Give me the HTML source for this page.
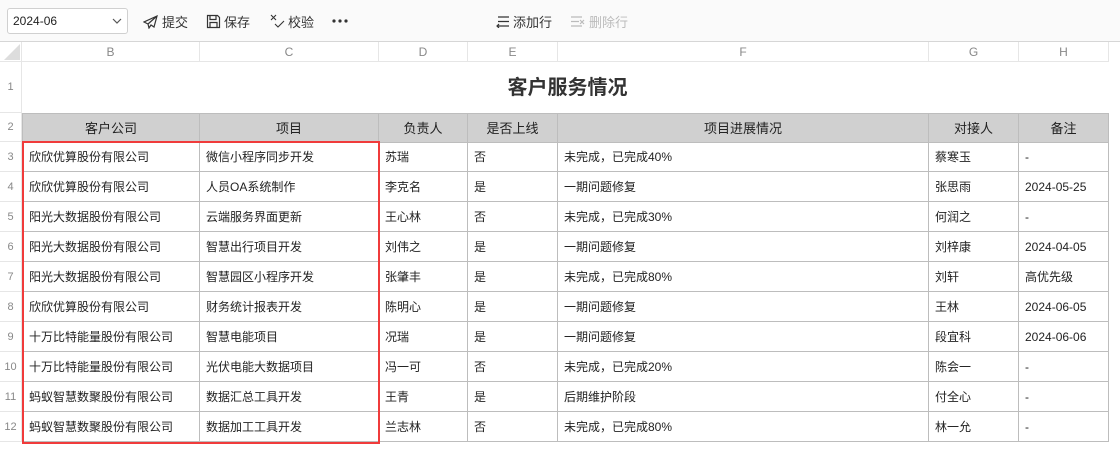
<!DOCTYPE html><html><head><meta charset="utf-8"><style>
*{margin:0;padding:0;box-sizing:border-box}
body{width:1120px;height:452px;overflow:hidden;background:#fff;font-family:"Liberation Sans","Noto Sans CJK SC",sans-serif;position:relative;color:#222}
.tb{position:absolute;left:0;top:0;width:1120px;height:42px;background:#fafafa;border-bottom:1px solid #d6d6d6}
.sel{position:absolute;left:7px;top:8px;width:121px;height:26px;border:1px solid #d0d0d0;border-radius:3px;background:#fff;font-size:12px;padding:5px 0 0 5px}
.btn{position:absolute;top:12px;font-size:13px;color:#333;display:flex;align-items:center;gap:3px}
.dis{color:#bbb}
.a{position:absolute}
.ch{position:absolute;top:42px;height:20px;font-size:12px;color:#888;text-align:center;line-height:20px;border-right:1px solid #e6e6e6;border-bottom:1px solid #e6e6e6}
.rh{position:absolute;left:0;width:22px;font-size:11px;color:#888;text-align:center;border-bottom:1px solid #e6e6e6;border-right:1px solid #e6e6e6}
.c{position:absolute;font-size:12px;line-height:31px;padding-left:6px;white-space:nowrap;border-right:1px solid #bdbdbd;border-bottom:1px solid #bdbdbd;height:30px}
.h{background:#d0d0d0;text-align:center;padding:0;font-size:13px;line-height:29px}
</style></head><body>
<div class="tb">
<div class="sel">2024-06<svg class="a" style="left:104px;top:8px" width="10" height="8"><path d="M1 2l4 4 4-4" stroke="#555" fill="none" stroke-width="1.2"/></svg></div>
<div class="btn" style="left:143px"><svg width="16" height="14"><path d="M14 1L1 7l4 2 1 4 2-3 3 2z M5 9l9-8" stroke="#333" fill="none" stroke-width="1.2"/></svg>提交</div>
<div class="btn" style="left:206px"><svg width="15" height="15"><path d="M1.5 1.5h10l2 2v10h-12z M4 1.5v4h6v-4 M4 13.5v-5h7v5" stroke="#333" fill="none" stroke-width="1.2"/></svg>保存</div>
<div class="btn" style="left:270px"><svg width="15" height="15"><path d="M1 1l5 5M6 1l-5 5M5 10l3 3 6-6" stroke="#333" fill="none" stroke-width="1.1"/></svg>校验</div>
<svg class="a" style="left:332px;top:19px" width="16" height="4"><circle cx="2" cy="2" r="1.6" fill="#333"/><circle cx="8" cy="2" r="1.6" fill="#333"/><circle cx="14" cy="2" r="1.6" fill="#333"/></svg>
<div class="btn" style="left:495px"><svg width="15" height="13"><path d="M3 2h11M3 6.5h11M2 11h12M4 9l-2 2 2 2" stroke="#333" fill="none" stroke-width="1.2"/></svg>添加行</div>
<div class="btn dis" style="left:570px"><svg width="16" height="13"><path d="M1 2h11M1 6.5h8M1 11h11M10 5l4 4M14 5l-4 4" stroke="#bbb" fill="none" stroke-width="1.2"/></svg>删除行</div>
</div>
<div class="ch" style="left:0;width:22px;background:#fff"><svg width="18" height="18" class="a" style="left:3px;top:1px"><path d="M17 1V17H1z" fill="#ddd"/></svg></div>
<div class="ch" style="left:22px;width:178px">B</div>
<div class="ch" style="left:200px;width:179px">C</div>
<div class="ch" style="left:379px;width:89px">D</div>
<div class="ch" style="left:468px;width:90px">E</div>
<div class="ch" style="left:558px;width:371px">F</div>
<div class="ch" style="left:929px;width:90px">G</div>
<div class="ch" style="left:1019px;width:90px">H</div>
<div class="rh" style="top:62px;height:51px;line-height:50px">1</div>
<div class="a" style="left:24px;top:62px;width:1087px;height:51px;text-align:center;font-size:20px;font-weight:bold;line-height:52px;color:#333">客户服务情况</div>
<div class="rh" style="top:113px;height:29px;line-height:29px">2</div>
<div id="g"></div>
<div class="a" style="left:22px;top:141px;width:358px;height:303px;border:2px solid #f03b3b"></div>
<script>
var X=[22,200,379,468,558,929,1019,1109];
var hd=["客户公司","项目","负责人","是否上线","项目进展情况","对接人","备注"];
var d=[["欣欣优算股份有限公司","微信小程序同步开发","苏瑞","否","未完成，已完成40%","蔡寒玉","-"],
["欣欣优算股份有限公司","人员OA系统制作","李克名","是","一期问题修复","张思雨","2024-05-25"],
["阳光大数据股份有限公司","云端服务界面更新","王心林","否","未完成，已完成30%","何润之","-"],
["阳光大数据股份有限公司","智慧出行项目开发","刘伟之","是","一期问题修复","刘梓康","2024-04-05"],
["阳光大数据股份有限公司","智慧园区小程序开发","张肇丰","是","未完成，已完成80%","刘轩","高优先级"],
["欣欣优算股份有限公司","财务统计报表开发","陈明心","是","一期问题修复","王林","2024-06-05"],
["十万比特能量股份有限公司","智慧电能项目","况瑞","是","一期问题修复","段宜科","2024-06-06"],
["十万比特能量股份有限公司","光伏电能大数据项目","冯一可","否","未完成，已完成20%","陈会一","-"],
["蚂蚁智慧数聚股份有限公司","数据汇总工具开发","王青","是","后期维护阶段","付全心","-"],
["蚂蚁智慧数聚股份有限公司","数据加工工具开发","兰志林","否","未完成，已完成80%","林一允","-"]];
var s="";
for(var j=0;j<7;j++)s+='<div class="c h" style="left:'+X[j]+'px;top:113px;width:'+(X[j+1]-X[j])+'px;'+(j==0?'border-left:1px solid #bdbdbd;':'')+'border-top:1px solid #bdbdbd;height:30px">'+hd[j]+'</div>';
for(var i=0;i<10;i++){var t=142+i*30;
s+='<div class="rh" style="top:'+t+'px;height:30px;line-height:31px">'+(i+3)+'</div>';
for(var j=0;j<7;j++)s+='<div class="c" style="left:'+X[j]+'px;top:'+t+'px;width:'+(X[j+1]-X[j])+'px;'+(j==0?'border-left:1px solid #bdbdbd;':'')+'">'+d[i][j]+'</div>';}
document.getElementById("g").innerHTML=s;
</script>
</body></html>
